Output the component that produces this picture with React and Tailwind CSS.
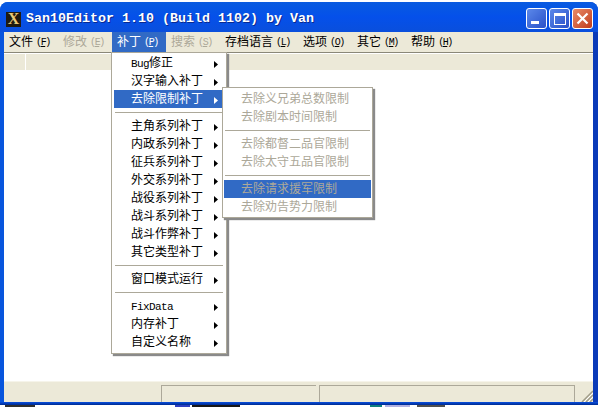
const cjk = "font-['Liberation_Mono','Noto_Sans_CJK_SC',monospace]";

const menuBar = [
  { label: "文件", key: "F" },
  { label: "修改", key: "E", disabled: true },
  { label: "补丁", key: "P", active: true },
  { label: "搜索", key: "S", disabled: true },
  { label: "存档语言", key: "L" },
  { label: "选项", key: "O" },
  { label: "其它", key: "M" },
  { label: "帮助", key: "H" },
];

const patchMenu = [
  [<><span className="text-[11px] tracking-[-0.6px]">Bug</span>修正</>],
  ["汉字输入补丁"],
  ["去除限制补丁", "active"],
  null,
  ["主角系列补丁"],
  ["内政系列补丁"],
  ["征兵系列补丁"],
  ["外交系列补丁"],
  ["战役系列补丁"],
  ["战斗系列补丁"],
  ["战斗作弊补丁"],
  ["其它类型补丁"],
  null,
  ["窗口模式运行"],
  null,
  [<span className="text-[11px] tracking-[-0.6px]">FixData</span>],
  ["内存补丁"],
  ["自定义名称"],
];

const limitMenu = [
  ["去除义兄弟总数限制"],
  ["去除剧本时间限制"],
  null,
  ["去除都督二品官限制"],
  ["去除太守五品官限制"],
  null,
  ["去除请求援军限制", "active"],
  ["去除劝告势力限制"],
];

const Separator = () => (
  <div className="h-[9px] flex items-center px-[1px]">
    <div className="h-[1px] w-full bg-[#aca899]"></div>
  </div>
);

const Arrow = ({ fill }) => (
  <svg width="4" height="7" viewBox="0 0 4 7" className="shrink-0">
    <path d="M0 0 L4 3.5 L0 7 Z" fill={fill} />
  </svg>
);

const WindowButton = ({ className, children }) => (
  <div className={`w-[21px] h-[21px] rounded-[3px] border border-white flex ${className}`}>
    {children}
  </div>
);

const App = () => {
  return (
    <div className={`relative w-[601px] h-[407px] bg-white overflow-hidden text-[12px] leading-none ${cjk}`}>
      <div className="mt-[2px] w-[598px] h-[403px] rounded-t-[8px] bg-gradient-to-r from-[#0855dd] to-[#0a3ab8] flex flex-col overflow-hidden">
        {/* title bar */}
        <div className="h-[30px] shrink-0 flex items-center pl-[6px] pr-[5px] bg-gradient-to-b from-[#0a5be0] via-[#0550ea] to-[#0a4fdc]">
          <div className="w-[15px] h-[15px] mt-[4px] bg-[#201a10] flex items-center justify-center font-['Liberation_Serif',serif] font-bold text-[16px] text-[#e8c878]">
            X
          </div>
          <span className="ml-[5px] mt-[4px] text-white font-bold text-[13.33px] [text-shadow:1px_1px_0_#0a2a90]">
            San10Editor 1.10 (Build 1102) by Van
          </span>
          <div className="ml-auto mt-[3px] flex gap-[2px]">
            <WindowButton className="bg-gradient-to-br from-[#5c88ea] to-[#2a50c8] items-end justify-start pl-[4px] pb-[4px]">
              <div className="w-[8px] h-[3px] bg-white"></div>
            </WindowButton>
            <WindowButton className="bg-gradient-to-br from-[#5c88ea] to-[#2a50c8] items-center justify-center">
              <div className="w-[12px] h-[12px] border border-t-[3px] border-white"></div>
            </WindowButton>
            <WindowButton className="bg-gradient-to-br from-[#e88a68] to-[#c03a18] items-center justify-center">
              <svg width="13" height="13" viewBox="0 0 13 13">
                <path d="M1.5 1.5 L11.5 11.5 M11.5 1.5 L1.5 11.5" stroke="white" strokeWidth="2.2" />
              </svg>
            </WindowButton>
          </div>
        </div>

        {/* window body */}
        <div className="flex-1 min-h-0 ml-[4px] mr-[5px] bg-white flex flex-col">
          <div className="h-[20px] shrink-0 bg-[#ece9d8] flex items-center">
            {menuBar.map((item) => (
              <div
                key={item.key}
                className={`h-[20px] pl-[5px] pr-[9px] pt-[2px] flex items-center whitespace-nowrap ${
                  item.active ? "bg-[#316ac5] text-white" : item.disabled ? "text-[#aca899]" : "text-black"
                }`}
              >
                {item.label}
                <span className="ml-[3px] w-[13px] text-[10px] tracking-[-1.4px]">
                  (<span className="underline">{item.key}</span>)
                </span>
              </div>
            ))}
          </div>
          <div className="h-[2px] shrink-0 bg-[#8a8878] border-b border-white"></div>
          <div className="h-[16px] shrink-0 bg-[#ece9d8] pl-[21px]">
            <div className="w-[1px] h-full bg-white"></div>
          </div>
          <div className="flex-1 bg-white"></div>

          {/* status bar */}
          <div className="h-[21px] shrink-0 bg-[#ece9d8] border-t border-[#f6f4ea] flex items-stretch pt-[3px]">
            <div className="w-[157px]"></div>
            <div className="w-[155px] border-l border-t border-[#aca899]"></div>
            <div className="w-[3px]"></div>
            <div className="w-[256px] border-l border-t border-r border-[#aca899]"></div>
            <svg width="12" height="12" viewBox="0 0 12 12" className="ml-auto self-end">
              <path d="M12 1 L1 12 M12 5 L5 12 M12 9 L9 12" stroke="#a09c88" strokeWidth="1.5" />
              <path d="M12 3 L3 12 M12 7 L7 12" stroke="#ffffff" strokeWidth="1" />
            </svg>
          </div>
        </div>
        <div className="h-[3px] shrink-0 bg-gradient-to-b from-[#0a50e0] to-[#002a90]"></div>
      </div>

      {/* bits of the desktop behind the window */}
      <div className="h-[2px] flex">
        <div className="ml-[5px] w-[30px] bg-[#303030]"></div>
        <div className="ml-[140px] w-[15px] bg-[#3040c0]"></div>
        <div className="ml-[2px] w-[48px] bg-[#181818]"></div>
        <div className="ml-[130px] w-[12px] bg-[#108080]"></div>
        <div className="ml-[3px] w-[25px] bg-[#b0b0e0]"></div>
        <div className="ml-[7px] w-[28px] bg-[#505050]"></div>
      </div>

      {/* patch dropdown */}
      <div className="absolute left-[111px] top-[52px] w-[116px] h-[302px] bg-white border border-[#aca899] shadow-[2px_2px_1px_#8a8a8a] px-[2px] pt-[1px]">
        {patchMenu.map((row, i) =>
          row === null ? (
            <Separator key={i} />
          ) : (
            <div
              key={i}
              className={`h-[18px] flex items-center pl-[17px] pr-[6px] pt-[2px] ${
                row[1] === "active" ? "bg-[#316ac5] text-white" : "text-black"
              }`}
            >
              <span className="flex-1 whitespace-nowrap">{row[0]}</span>
              <Arrow fill={row[1] === "active" ? "white" : "black"} />
            </div>
          )
        )}
      </div>

      {/* limit submenu */}
      <div className="absolute left-[222px] top-[87px] w-[151px] h-[131px] bg-white border border-[#aca899] shadow-[2px_2px_1px_#8a8a8a] px-[1px] pt-[2px]">
        {limitMenu.map((row, i) =>
          row === null ? (
            <Separator key={i} />
          ) : (
            <div
              key={i}
              className={`h-[18px] flex items-center pl-[17px] pt-[2px] whitespace-nowrap text-[#aca899] ${
                row[1] === "active" ? "bg-[#316ac5]" : ""
              }`}
            >
              {row[0]}
            </div>
          )
        )}
      </div>
    </div>
  );
};

export default App;
